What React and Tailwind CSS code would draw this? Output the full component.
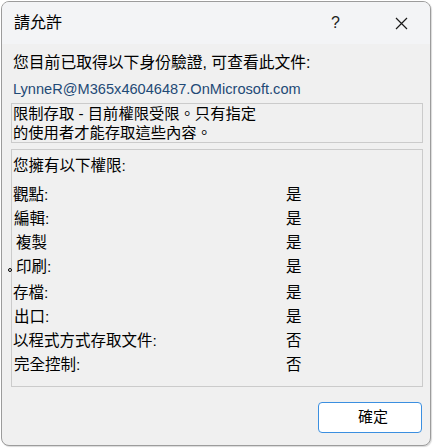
import React from 'react'

const cjk = { fontFamily: '"Liberation Sans", "Noto Sans CJK TC", sans-serif' }

const rows = [
  { label: '觀點:', value: '是' },
  { label: '編輯:', value: '是', pad: 'pl-[1px]' },
  { label: '複製', value: '是', pad: 'pl-[3px]' },
  { label: '印刷:', value: '是', pad: 'pl-[3px]', dot: true },
  { label: '存檔:', value: '是', extra: 'mt-[2px]' },
  { label: '出口:', value: '是', pad: 'pl-[1px]' },
  { label: '以程式方式存取文件:', value: '否' },
  { label: '完全控制:', value: '否', pad: 'pl-[1px]' },
]

export default function App() {
  return (
    <div className="w-[433px] h-[448px] bg-white pt-[1px] pl-[1px]" style={cjk}>
      <div className="w-[430px] h-[445px] rounded-[8px] border border-[#9c9c9c] bg-[#f0f0f0] overflow-hidden flex flex-col text-black shadow-[1px_1px_1px_rgba(0,0,0,0.15)]">
        {/* title bar */}
        <div className="h-[42px] shrink-0 bg-[#f3f4f6] flex items-center pl-[12px] pr-[22px]">
          <span className="text-[16px] leading-none">請允許</span>
          <span className="ml-auto text-[16px] leading-none text-[#222] mr-[55px]">?</span>
          <svg width="13" height="13" viewBox="0 0 13 13" className="text-[#1a1a1a]">
            <path d="M1 1 L12 12 M12 1 L1 12" stroke="currentColor" strokeWidth="1.2" fill="none" />
          </svg>
        </div>

        {/* body */}
        <div className="flex flex-col pl-[9px] pr-[7px] flex-1">
          <div className="pl-[2px] pt-[6px] text-[15.8px] leading-[26px]">您目前已取得以下身份驗證, 可查看此文件:</div>
          <div className="pl-[2px] text-[14.6px] leading-[26px] text-[#1f4a76]">LynneR@M365x46046487.OnMicrosoft.com</div>

          <div className="mt-[1px] border border-[#cbcbcb] pl-[1px] text-[15.3px] leading-[19px]">
            <div>限制存取 - 目前權限受限。只有指定</div>
            <div>的使用者才能存取這些內容。</div>
          </div>

          <div className="mt-[6px] h-[238px] border border-[#cbcbcb] pl-[1px] pt-[6px] text-[15.5px]">
            <div className="leading-[20px]">您擁有以下權限:</div>
            <div className="mt-[7px] flex flex-col">
              {rows.map((r) => (
                <div key={r.label} className={`relative h-[24px] grid grid-cols-[273px_auto] items-center ${r.extra || ''}`}>
                  <span className={r.pad || ''}>{r.label}</span>
                  <span>{r.value}</span>
                  {r.dot && (
                    <span className="absolute left-[-5px] top-[13px] w-[4px] h-[4px] rounded-full border border-black" />
                  )}
                </div>
              ))}
            </div>
          </div>

          <div className="flex justify-end mt-[15px] pr-[1px]">
            <button className="w-[104px] h-[31px] rounded-[4px] border border-[#3b8fe0] bg-white text-[15px] pl-[6px]">
              確定
            </button>
          </div>
        </div>
      </div>
    </div>
  )
}
